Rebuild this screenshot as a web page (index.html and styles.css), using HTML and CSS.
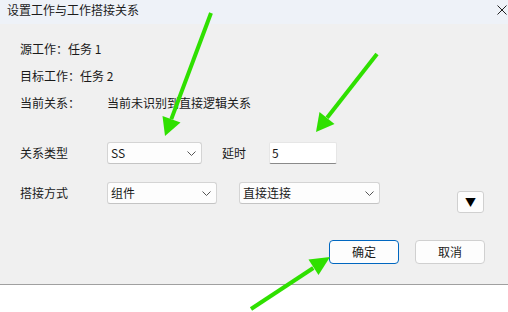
FILE: index.html
```html
<!DOCTYPE html>
<html lang="zh-CN">
<head>
<meta charset="utf-8">
<title>设置工作与工作搭接关系</title>
<link rel="stylesheet" href="styles.css">
</head>
<body>
<div class="dialog">
  <div class="titlebar">
    <span class="title">设置工作与工作搭接关系</span>
    <svg class="close" width="10" height="10" viewBox="0 0 10 10"><path d="M0.5 0.5L9.5 9.5M9.5 0.5L0.5 9.5" stroke="#222" stroke-width="1"/></svg>
  </div>
  <div class="body">
    <div class="info">
      <div class="line">源工作：任务 1</div>
      <div class="line">目标工作：任务 2</div>
      <div class="line"><span class="lbl-cur">当前关系：</span><span>当前未识别到直接逻辑关系</span></div>
    </div>
    <div class="row row1">
      <span class="label">关系类型</span>
      <div class="select w95"><span>SS</span><svg class="chev" width="9" height="5" viewBox="0 0 9 5"><path d="M0.5 0.5L4.5 4.5L8.5 0.5" fill="none" stroke="#555" stroke-width="1"/></svg></div>
      <span class="delay">延时</span>
      <div class="input">5</div>
    </div>
    <div class="row row2">
      <span class="label">搭接方式</span>
      <div class="select w110"><span>组件</span><svg class="chev" width="9" height="5" viewBox="0 0 9 5"><path d="M0.5 0.5L4.5 4.5L8.5 0.5" fill="none" stroke="#555" stroke-width="1"/></svg></div>
      <div class="select w141 ml22"><span>直接连接</span><svg class="chev" width="9" height="5" viewBox="0 0 9 5"><path d="M0.5 0.5L4.5 4.5L8.5 0.5" fill="none" stroke="#555" stroke-width="1"/></svg></div>
      <div class="more">▼</div>
    </div>
    <div class="actions">
      <div class="btn primary">确定</div>
      <div class="btn">取消</div>
    </div>
  </div>
</div>
<svg class="arrows" width="508" height="312" viewBox="0 0 508 312">
  <g stroke="#2fe000" stroke-width="4" fill="#2fe000">
    <line x1="211" y1="13" x2="171.3" y2="119.1"/>
    <polygon points="165,136 180.5,122.5 162.5,116" stroke="none"/>
    <line x1="377" y1="54" x2="327.1" y2="117.8"/>
    <polygon points="316,132 334.5,124 319.5,112" stroke="none"/>
    <line x1="251" y1="309" x2="313.3" y2="268"/>
    <polygon points="330,257 318.5,275 308.5,259.5" stroke="none"/>
  </g>
</svg>
</body>
</html>
```

FILE: styles.css
```css
html, body {
  margin: 0;
  padding: 0;
  background: #ffffff;
}
body {
  width: 508px;
  height: 312px;
  position: relative;
  overflow: hidden;
  font-family: "Noto Sans CJK SC", "Noto Sans", sans-serif;
  font-size: 12px;
  color: #1a1a1a;
}
.dialog {
  width: 508px;
  display: flex;
  flex-direction: column;
  border-bottom: 1px solid #a0a0a0;
}
.titlebar {
  height: 24px;
  background: #eef2f8;
  display: flex;
  align-items: center;
  justify-content: space-between;
  padding: 0 1px 4px 7px;
  box-sizing: border-box;
}
.title {
  font-size: 12px;
  color: #1c1c1c;
  line-height: 16px;
}
.close {
  display: block;
}
.body {
  background: #f0f0f0;
  height: 260px;
  box-sizing: border-box;
  padding: 11px 0 0 20px;
  display: flex;
  flex-direction: column;
}
.info {
  display: flex;
  flex-direction: column;
}
.line {
  height: 27px;
  line-height: 27px;
  display: flex;
}
.lbl-cur {
  width: 87px;
}
.row {
  display: flex;
  align-items: flex-start;
}
.row1 {
  margin-top: 26px;
}
.row2 {
  margin-top: 18px;
}
.label {
  width: 87px;
  height: 22px;
  line-height: 22px;
  flex: none;
}
.select {
  height: 22px;
  box-sizing: border-box;
  background: #fdfdfd;
  border: 1px solid #d4d4d4;
  border-bottom-color: #c4c4c4;
  border-radius: 3px;
  display: flex;
  align-items: center;
  justify-content: space-between;
  padding: 0 5px 0 3px;
  line-height: 20px;
  flex: none;
}
.chev {
  display: block;
}
.w95 { width: 95px; }
.w110 { width: 110px; }
.w141 { width: 141px; }
.ml22 { margin-left: 22px; }
.delay {
  margin-left: 20px;
  width: 47px;
  height: 22px;
  line-height: 22px;
}
.input {
  width: 68px;
  height: 22px;
  box-sizing: border-box;
  background: #ffffff;
  border: 1px solid #e6e6e6;
  border-bottom: 1px solid #8a8a8a;
  border-radius: 2px;
  padding-left: 2px;
  line-height: 20px;
}
.more {
  margin-left: 77px;
  margin-top: 9px;
  width: 27px;
  height: 22px;
  box-sizing: border-box;
  background: #fdfdfd;
  border: 1px solid #d0d0d0;
  border-radius: 3px;
  font-size: 11px;
  line-height: 20px;
  text-align: center;
  color: #000;
}
.actions {
  display: flex;
  justify-content: flex-end;
  gap: 16px;
  padding-right: 23px;
  margin-top: 27px;
}
.btn {
  width: 70px;
  height: 24px;
  box-sizing: border-box;
  background: #fdfdfd;
  border: 1px solid #d0d0d0;
  border-radius: 4px;
  line-height: 22px;
  text-align: center;
}
.btn.primary {
  border-color: #0067c0;
}
.arrows {
  position: absolute;
  left: 0;
  top: 0;
  pointer-events: none;
}
```
